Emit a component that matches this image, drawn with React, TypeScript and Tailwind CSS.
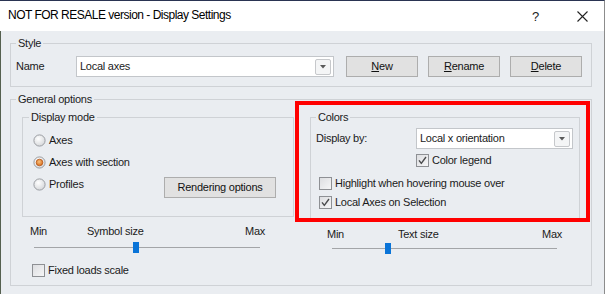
import React from "react";

const F = { fontFamily: '"Liberation Sans", Arial, sans-serif' };

function Radio({ checked }: { checked?: boolean }) {
  return (
    <svg width="13" height="13" viewBox="0 0 13 13" className="shrink-0">
      <defs>
        <radialGradient id="rg" cx="0.4" cy="0.35" r="0.7">
          <stop offset="0" stopColor="#ffffff" />
          <stop offset="1" stopColor="#d4d6d9" />
        </radialGradient>
        <radialGradient id="og" cx="0.45" cy="0.4" r="0.6">
          <stop offset="0" stopColor="#fbc27c" />
          <stop offset="1" stopColor="#d46a1c" />
        </radialGradient>
      </defs>
      <circle cx="6.5" cy="6.5" r="5.6" fill="url(#rg)" stroke="#9b9ea3" strokeWidth="1" />
      {checked && <circle cx="6.5" cy="6.5" r="3.3" fill="url(#og)" stroke="#b5581c" strokeWidth="0.8" />}
    </svg>
  );
}

function Check({ checked }: { checked?: boolean }) {
  return (
    <svg width="13" height="13" viewBox="0 0 13 13" className="shrink-0">
      <defs>
        <linearGradient id="cg" x1="0" y1="0" x2="1" y2="1">
          <stop offset="0" stopColor="#dcdde0" />
          <stop offset="1" stopColor="#f7f7f8" />
        </linearGradient>
      </defs>
      <rect x="0.5" y="0.5" width="12" height="12" fill="url(#cg)" stroke="#8e9094" />
      {checked && (
        <path d="M3 6.4 L5.3 9.4 L10 3" fill="none" stroke="#4a4b4d" strokeWidth="1.4" strokeLinejoin="round" />
      )}
    </svg>
  );
}

function DropBtn() {
  return (
    <div className="w-[16px] h-[16px] border border-[#c6c8cb] rounded-[2px] bg-[#f4f5f6] flex items-center justify-center">
      <svg width="6" height="4" viewBox="0 0 6 4">
        <path d="M0 0 H6 L3 3.5 Z" fill="#5a5a5a" />
      </svg>
    </div>
  );
}

function Btn({ children, w }: { children: React.ReactNode; w: string }) {
  return (
    <div className={`${w} h-[21px] bg-[#e1e1e1] border border-[#adadad] flex items-center justify-center text-[#111]`}>
      {children}
    </div>
  );
}

export default function App() {
  return (
    <div
      className="w-[605px] h-[294px] flex flex-col text-[11px] leading-[13px] tracking-[-0.25px] text-[#1b1b1b] border-t border-t-[#2a3452] border-r border-r-[#8c8c8c] overflow-hidden"
      style={F}
    >
      {/* Title bar */}
      <div className="h-[30px] bg-white flex items-center pl-[8px] shrink-0">
        <span className="text-[12px] tracking-[-0.5px] text-[#000] mt-[-1px]">NOT FOR RESALE version - Display Settings</span>
        <span className="ml-auto text-[13px] text-[#222] mr-[38px]">?</span>
        <svg width="11" height="11" viewBox="0 0 11 11" className="mr-[16px]">
          <path d="M0.5 0.5 L10.5 10.5 M10.5 0.5 L0.5 10.5" stroke="#222" strokeWidth="1.1" />
        </svg>
      </div>

      {/* Body */}
      <div className="flex-1 bg-[#eaedf1] border-l border-l-[#55604f] pl-[9px] pr-[12px] pt-[6px]">
        {/* Style */}
        <fieldset className="border border-[#cfd2d6] px-[5px] pb-[9px]">
          <legend className="px-[2px]">Style</legend>
          <div className="flex items-center mt-[6px]">
            <span className="w-[60px]">Name</span>
            <div className="w-[258px] h-[21px] bg-white border border-[#c3c6ca] flex items-center pl-[3px] pr-[2px]">
              <span className="flex-1">Local axes</span>
              <DropBtn />
            </div>
            <div className="flex gap-[10px] ml-[12px]">
              <Btn w="w-[72px]"><span><span className="underline">N</span>ew</span></Btn>
              <Btn w="w-[72px]"><span><span className="underline">R</span>ename</span></Btn>
              <Btn w="w-[72px]"><span><span className="underline">D</span>elete</span></Btn>
            </div>
          </div>
        </fieldset>

        {/* General options */}
        <fieldset className="border border-[#cfd2d6] px-[5px] pb-[8px] mt-[6px]">
          <legend className="px-[2px]">General options</legend>
          <div className="ml-[6px] flex gap-[16px] mt-[5px]">
            {/* Left column */}
            <div className="w-[272px] flex flex-col">
              <fieldset className="border border-[#cfd2d6] px-[6px] pb-[21px]">
                <legend className="px-[2px]">Display mode</legend>
                <div className="flex items-end mt-[5px]">
                  <div className="flex flex-col ml-[4px]">
                    <div className="h-[22px] flex items-center gap-[3px]"><Radio /><span>Axes</span></div>
                    <div className="h-[22px] flex items-center gap-[3px]"><Radio checked /><span>Axes with section</span></div>
                    <div className="h-[22px] flex items-center gap-[3px]"><Radio /><span>Profiles</span></div>
                  </div>
                  <div className="ml-auto mr-[11px] mb-[-3px]">
                    <Btn w="w-[112px]">Rendering options</Btn>
                  </div>
                </div>
              </fieldset>
              <div className="flex mt-[8px] ml-[8px] w-[235px]">
                <span className="w-[57px]">Min</span>
                <span>Symbol size</span>
                <span className="ml-auto">Max</span>
              </div>
              <div className="relative ml-[12px] w-[226px] h-[11px] mt-[4px] flex items-center">
                <div className="w-full h-px bg-[#a3a5a8]" />
                <div className="absolute left-[99px] top-0 w-[6px] h-[11px] bg-[#0a74d8]" />
              </div>
              <div className="flex items-center gap-[3px] mt-[11px] ml-[10px]">
                <Check />
                <span>Fixed loads scale</span>
              </div>
            </div>

            {/* Right column */}
            <div className="w-[270px] flex flex-col">
              <div className="relative">
                <fieldset className="border border-[#cfd2d6] px-[5px] pb-[9px]">
                  <legend className="px-[2px]">Colors</legend>
                  <div className="flex items-center mt-[4px]">
                    <span className="w-[100px]">Display by:</span>
                    <div className="w-[157px] h-[21px] bg-white border border-[#c3c6ca] flex items-center pl-[3px] pr-[2px]">
                      <span className="flex-1">Local x orientation</span>
                      <DropBtn />
                    </div>
                  </div>
                  <div className="flex items-center gap-[3px] mt-[5px] ml-[100px]">
                    <Check checked />
                    <span>Color legend</span>
                  </div>
                  <div className="flex items-center gap-[3px] mt-[10px] ml-[3px]">
                    <Check />
                    <span>Highlight when hovering mouse over</span>
                  </div>
                  <div className="flex items-center gap-[3px] mt-[6px] ml-[3px]">
                    <Check checked />
                    <span>Local Axes on Selection</span>
                  </div>
                </fieldset>
                <div className="absolute -left-[15px] -top-[10px] -right-[10px] -bottom-[3px] border-4 border-[#ff0000] pointer-events-none" />
              </div>
              <div className="flex mt-[9px] ml-[17px] w-[235px]">
                <span className="w-[71px]">Min</span>
                <span>Text size</span>
                <span className="ml-auto">Max</span>
              </div>
              <div className="relative ml-[22px] w-[225px] h-[11px] mt-[2px] flex items-center">
                <div className="w-full h-px bg-[#a3a5a8]" />
                <div className="absolute left-[53px] top-0 w-[6px] h-[11px] bg-[#0a74d8]" />
              </div>
            </div>
          </div>
        </fieldset>
      </div>
    </div>
  );
}
